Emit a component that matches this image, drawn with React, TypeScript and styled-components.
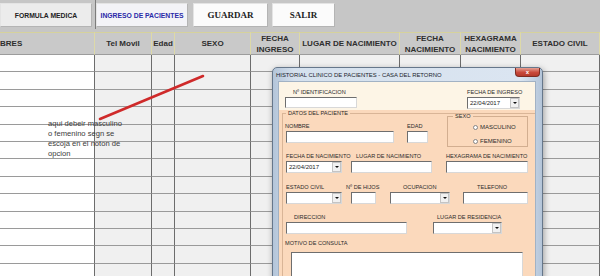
import React from 'react';
import styled, {createGlobalStyle} from 'styled-components';

const GlobalStyle = createGlobalStyle`
  html, body {
    margin: 0;
    padding: 0;
  }
  body {
    font-family: "Liberation Sans", Arial, sans-serif;
    background: #fff;
  }
`

const Screen = styled.div`
  position: relative;
  width: 600px;
  height: 276px;
  overflow: hidden;
  background: #c6c6c6;
`

// barra de botones de la hoja
const Toolbar = styled.div`
  height: 32px;
  box-sizing: border-box;
  padding-top: 3px;
  display: flex;
  align-items: flex-start;
  background: #c6c6c6;
`
const ToolButton = styled.div<{$w: number; $ml?: number; $serif?: boolean; $blue?: boolean}>`
  width: ${p => p.$w}px;
  height: 24px;
  margin-left: ${p => p.$ml ?? 0}px;
  box-sizing: border-box;
  display: flex;
  align-items: center;
  justify-content: center;
  background: ${p => p.$serif ? '#fbfbfb' : p.$blue ? '#f3f3f7' : '#ececec'};
  border: 1px solid #b4b4b4;
  border-top-color: #e4e4e4;
  border-left-color: #e4e4e4;
  font-family: ${p => p.$serif ? '"Liberation Serif", "Times New Roman", serif' : '"Liberation Sans", Arial, sans-serif'};
  font-size: ${p => p.$serif ? 9 : 6.8}px;
  font-weight: bold;
  color: ${p => p.$blue ? '#2a2aa8' : '#222'};
  white-space: nowrap;
`
const ToolDivider = styled.div`
  width: 1px;
  height: 29px;
  margin: -3px 0 0 3px;
  background: #7c7c7c;
`

const Sheet = styled.div`
  display: grid;
  grid-template-columns: 95px 57px 23px 76px 49px 100px 61px 60px 79px;
  grid-template-rows: 23px repeat(13, 17.4px);
`
const HeadCell = styled.div<{$left?: boolean}>`
  box-sizing: border-box;
  display: flex;
  align-items: center;
  justify-content: ${p => p.$left ? 'flex-start' : 'center'};
  text-align: center;
  background: #c9c9c9;
  border-top: 1px solid #d6d29c;
  border-right: 1px solid #ddd9a8;
  border-bottom: 1px solid #9c9c9c;
  font-size: 8px;
  line-height: 11px;
  font-weight: bold;
  color: #2e2e2e;
`
const Cell = styled.div<{$first?: boolean}>`
  box-sizing: border-box;
  background: ${p => p.$first ? '#fff' : '#f0f0f0'};
  border-right: 1px solid #6c6c6c;
  border-bottom: 1px solid #9a9a9a;
`

const Note = styled.div`
  position: absolute;
  left: 48px;
  top: 119px;
  width: 78px;
  font-family: "Liberation Sans", Arial, sans-serif;
  font-size: 7.6px;
  line-height: 10px;
  color: #3a3a3a;
`
const Arrow = styled.svg`
  position: absolute;
  left: 96px;
  top: 72px;
`

// ventana del formulario
const Dialog = styled.div`
  position: absolute;
  left: 272px;
  top: 67px;
  width: 271px;
  height: 224px;
  box-sizing: border-box;
  display: flex;
  flex-direction: column;
  border: 1px solid #66778b;
  border-radius: 5px 5px 0 0;
  background: linear-gradient(to right, #b4c5d9, #d5e1ee 8%, #dbe5f1 92%, #b4c5d9);
  box-shadow: 1px 2px 6px rgba(0, 0, 0, 0.35);
`
const TitleBar = styled.div`
  height: 14px;
  flex: none;
  display: flex;
  justify-content: space-between;
  align-items: flex-start;
  padding: 0 2px 0 3px;
`
const Title = styled.span`
  margin-top: 3px;
  font-size: 5.9px;
  line-height: 8px;
  color: #1b242e;
  white-space: nowrap;
`
const CloseButton = styled.div`
  width: 25px;
  height: 9px;
  box-sizing: border-box;
  display: flex;
  align-items: center;
  justify-content: center;
  border: 1px solid #7e2c22;
  border-top: none;
  border-radius: 0 0 4px 4px;
  background: linear-gradient(#e6a093, #c9493b 55%, #b53a2c);
  color: #fff;
  font-size: 6px;
  font-weight: bold;
  line-height: 6px;
`
const Client = styled.div`
  flex: 1;
  margin: 0 7px 0 6px;
  display: flex;
  flex-direction: column;
  box-shadow: 0 0 0 1px #a2b2c4;
`
const TopSection = styled.div`
  height: 28px;
  flex: none;
  box-sizing: border-box;
  padding-top: 5px;
  display: flex;
  align-items: flex-start;
  background: #fdf5e6;
`
const PeachSection = styled.div`
  flex: 1;
  padding-left: 3px;
  background: #fbd9bc;
`
const Frame = styled.fieldset`
  margin: 0;
  padding: 0;
  min-width: 0;
  border: none;
  border-top: 1px solid #d9b597;
  border-left: 1px solid #d9b597;
`
const Legend = styled.legend<{$ml?: number}>`
  margin-left: ${p => p.$ml ?? 3}px;
  padding: 0 2px;
  height: 6px;
  line-height: 6px;
  font-size: 5.6px;
  color: #2b2b2b;
  white-space: nowrap;
`
const Row = styled.div<{$mt: number}>`
  display: flex;
  align-items: flex-start;
  margin-top: ${p => p.$mt}px;
`
const Field = styled.div<{$ml: number; $w: number; $mt?: number}>`
  flex: none;
  display: flex;
  flex-direction: column;
  width: ${p => p.$w}px;
  margin-left: ${p => p.$ml}px;
  margin-top: ${p => p.$mt ?? 0}px;
`
const Label = styled.span<{$indent?: number; $mb?: number}>`
  height: 10px;
  line-height: 10px;
  margin-left: ${p => p.$indent ?? 0}px;
  margin-bottom: ${p => p.$mb ?? 0}px;
  font-size: 5.6px;
  color: #2b2b2b;
  white-space: nowrap;
`
const TextBox = styled.div<{$h?: number}>`
  height: ${p => p.$h ?? 12}px;
  box-sizing: border-box;
  background: #fff;
  border: 1px solid #d8d8d8;
  border-top-color: #6e6e6e;
  border-left-color: #6e6e6e;
`
const Combo = styled(TextBox)`
  display: flex;
  align-items: stretch;
  justify-content: space-between;
  padding-left: 2px;
  font-size: 6px;
  line-height: 10px;
  color: #222;
`
const DropButton = styled.span`
  width: 9px;
  box-sizing: border-box;
  display: flex;
  align-items: center;
  justify-content: center;
  background: #f1f1f1;
  border: 1px solid #c4c4c4;
  &::after {
    content: '';
    border-left: 2px solid transparent;
    border-right: 2px solid transparent;
    border-top: 2px solid #111;
  }
`
const SexFrame = styled.fieldset`
  flex: none;
  width: 81px;
  height: 34px;
  box-sizing: border-box;
  margin: -3px 0 0 19px;
  padding: 3px 0 0 25px;
  min-width: 0;
  display: flex;
  flex-direction: column;
  gap: 4px;
  border: 1px solid #d2ae90;
`
const Option = styled.label`
  display: flex;
  align-items: center;
  gap: 2px;
  height: 10px;
  font-size: 6px;
  color: #2b2b2b;
`
const RadioDot = styled.span`
  width: 5px;
  height: 5px;
  box-sizing: border-box;
  border-radius: 50%;
  border: 1px solid #858585;
  background: #fff;
`

const columns = [
    {w: 95, title: 'BRES'},
    {w: 57, title: 'Tel Movil'},
    {w: 23, title: 'Edad'},
    {w: 76, title: 'SEXO'},
    {w: 49, title: 'FECHA INGRESO'},
    {w: 100, title: 'LUGAR DE NACIMIENTO'},
    {w: 61, title: 'FECHA NACIMIENTO'},
    {w: 60, title: 'HEXAGRAMA NACIMIENTO'},
    {w: 79, title: 'ESTADO CIVIL'},
]
const rows = Array.from({length: 13}, (_, i) => i)

const ComboField = ({value}: {value?: string}) => (
    <Combo>
        <span>{value}</span>
        <DropButton/>
    </Combo>
)

const App: React.FC = () => {
    return (
        <Screen>
            <GlobalStyle/>
            <Toolbar>
                <ToolButton $w={92}>FORMULA MEDICA</ToolButton>
                <ToolDivider/>
                <ToolButton $w={92} $blue>INGRESO DE PACIENTES</ToolButton>
                <ToolButton $w={75} $ml={5} $serif>GUARDAR</ToolButton>
                <ToolButton $w={63} $ml={4} $serif>SALIR</ToolButton>
            </Toolbar>
            <Sheet>
                {columns.map((c, i) => <HeadCell key={c.title} $left={i === 0}>{c.title}</HeadCell>)}
                {rows.map(r => columns.map((c, i) => <Cell key={`${r}-${i}`} $first={i === 0}/>))}
            </Sheet>

            <Arrow width="112" height="52">
                <line x1="4" y1="47" x2="107" y2="4" stroke="#cf2a2a" strokeWidth="2.6" strokeLinecap="round"/>
            </Arrow>
            <Note>aqui debeir masculino o femenino segn se escoja en el noton de opcion</Note>

            <Dialog>
                <TitleBar>
                    <Title>HISTORIAL CLINICO DE PACIENTES - CASA DEL RETORNO</Title>
                    <CloseButton>x</CloseButton>
                </TitleBar>
                <Client>
                    <TopSection>
                        <Field $ml={6} $w={72}>
                            <Label $indent={8}>Nº IDENTIFICACION</Label>
                            <TextBox $h={11}/>
                        </Field>
                        <Field $ml={110} $w={53}>
                            <Label>FECHA DE INGRESO</Label>
                            <ComboField value="22/04/2017"/>
                        </Field>
                    </TopSection>
                    <PeachSection>
                        <Frame>
                            <Legend>DATOS DEL PACIENTE</Legend>
                            <Row $mt={0}>
                                <Field $ml={3} $w={108} $mt={5}>
                                    <Label $indent={-1}>NOMBRE</Label>
                                    <TextBox/>
                                </Field>
                                <Field $ml={13} $w={21} $mt={5}>
                                    <Label>EDAD</Label>
                                    <TextBox/>
                                </Field>
                                <SexFrame>
                                    <Legend $ml={-20}>SEXO</Legend>
                                    <Option><RadioDot/>MASCULINO</Option>
                                    <Option><RadioDot/>FEMENINO</Option>
                                </SexFrame>
                            </Row>
                            <Row $mt={4}>
                                <Field $ml={3} $w={56}>
                                    <Label>FECHA DE NACIMIENTO</Label>
                                    <ComboField value="22/04/2017"/>
                                </Field>
                                <Field $ml={9} $w={81}>
                                    <Label $indent={5}>LUGAR DE NACIMIENTO</Label>
                                    <TextBox/>
                                </Field>
                                <Field $ml={14} $w={82}>
                                    <Label>HEXAGRAMA DE NACIMIENTO</Label>
                                    <TextBox/>
                                </Field>
                            </Row>
                            <Row $mt={9}>
                                <Field $ml={3} $w={56}>
                                    <Label>ESTADO CIVIL</Label>
                                    <ComboField/>
                                </Field>
                                <Field $ml={9} $w={25}>
                                    <Label $indent={-5}>Nº DE HIJOS</Label>
                                    <TextBox/>
                                </Field>
                                <Field $ml={14} $w={60}>
                                    <Label $indent={13}>OCUPACION</Label>
                                    <ComboField/>
                                </Field>
                                <Field $ml={13} $w={65}>
                                    <Label $indent={14}>TELEFONO</Label>
                                    <TextBox/>
                                </Field>
                            </Row>
                            <Row $mt={8}>
                                <Field $ml={3} $w={121}>
                                    <Label $indent={8}>DIRECCION</Label>
                                    <TextBox/>
                                </Field>
                                <Field $ml={26} $w={69}>
                                    <Label $indent={4}>LUGAR DE RESIDENCIA</Label>
                                    <ComboField/>
                                </Field>
                            </Row>
                            <Row $mt={4}>
                                <Field $ml={8} $w={232}>
                                    <Label $indent={-6} $mb={4}>MOTIVO DE CONSULTA</Label>
                                    <TextBox $h={40}/>
                                </Field>
                            </Row>
                        </Frame>
                    </PeachSection>
                </Client>
            </Dialog>
        </Screen>
    );
};

export default App;
